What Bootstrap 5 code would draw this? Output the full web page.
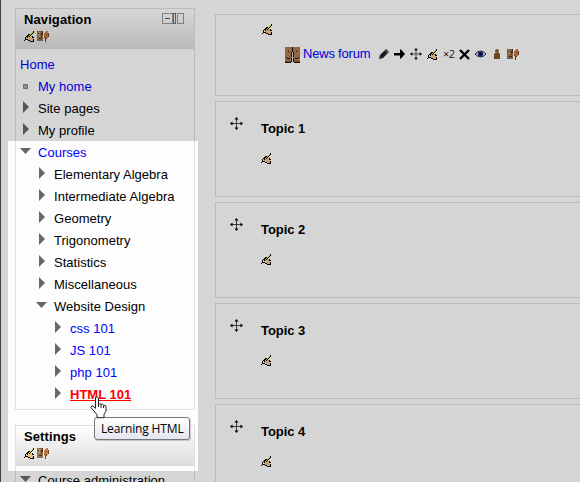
<!DOCTYPE html>
<html lang="en">
<head>
<meta charset="utf-8">
<meta name="viewport" content="width=device-width, initial-scale=1">
<title>Course topics</title>
<link href="https://cdn.jsdelivr.net/npm/bootstrap@5.3.0/dist/css/bootstrap.min.css" rel="stylesheet">
<style>
body{font:13px/22px "Liberation Sans",Arial,sans-serif;color:#000;background:#fdfdfd;height:482px}
.page-wrap{height:482px;border-left:1px solid #4c4a50}
.side{width:180px;margin-left:14px;padding-top:8px}
.blk{border:1.5px solid #dfdfdf}
.blk-nav{height:402px;margin-bottom:15px}
.blk-head{height:40px;background:linear-gradient(#fff,#dcdcdc);padding:1px 10px 0 8px;line-height:20px}
.blk-head b{letter-spacing:.1px}
.icons{gap:2px;padding-top:1px}
.tree{padding:5px 0 0 4px}
.tree a,.forum a{color:#00f;text-decoration:none}
.node{height:22px;display:flex;align-items:center;letter-spacing:.03px}
.mk{width:18px;flex:none;display:flex;align-items:center;height:22px}
.mk svg{display:block;margin-bottom:4px}
.mk .sq{margin-bottom:0}
.arr{padding-left:3px}
.l2{padding-left:16px}.l3{padding-left:32px}
.tree .cur{color:#f00;font-weight:bold;text-decoration:underline;letter-spacing:0}
.main{margin-left:20px;padding-top:14px;min-width:0}
.topic{border:1px solid #dfdfdf;border-right:0;height:96px;margin-bottom:5px;padding-left:14px}
.topic-first{height:82px;padding-left:46px}
.topic .mv{margin-top:15px;margin-right:18px}
.topic h3{font-size:13px;line-height:16px;font-weight:bold;margin:19px 0 16px;letter-spacing:-.05px}
.hand,.mv{display:block;flex:none}
.topic-first>.hand{margin-top:9px}
.forum{margin:9px 0 0 23px;height:22px}
.forum a{letter-spacing:-.2px;width:75px;margin:-2px 0 0 2px}
.acts{margin-top:-2px}
.acts svg{flex:none}
.x2{font:11px/12px "Open Sans",sans-serif;letter-spacing:-.6px;color:#222;width:16px}
.spot{left:8px;top:141px;width:190px;height:330px;box-shadow:0 0 0 900px rgba(0,0,0,.157);pointer-events:none}
.tip{left:94px;top:417px;width:96px;height:23px;border:1px solid #767676;border-radius:3px;background:linear-gradient(#fff,#e4e5f0);font:12px/21px "Open Sans",sans-serif;letter-spacing:-.15px;padding-left:6px;white-space:nowrap;box-shadow:1px 1px 1px #0003}
.ptr{left:89px;top:396px}
</style>
<script src="https://cdn.jsdelivr.net/npm/bootstrap@5.3.0/dist/js/bootstrap.bundle.min.js"></script>
</head>
<body class="overflow-hidden position-relative">
<svg width="0" height="0" class="position-absolute">
<defs>
<symbol id="hand" viewBox="0 0 11 11" shape-rendering="crispEdges">
<path fill="#f0c090" d="M6 5h2v1H6zM4 6h4v1H4zM3 7h6v1H3zM4 8h5v1H4zM6 9h3v1H6z"/>
<path fill="#e8dc10" d="M8 1h1v1H8zM7 2h1v1H7zM6 3h1v1H6zM5 4h1v1H5zM4 5h1v1H4z"/>
<path fill="#000" d="M9 0h1v1H9zM9 1h1v1H9zM8 2h1v1H8zM4 3h2v1H4zM7 3h1v1H7zM3 4h2v1H3zM6 4h1v1H6zM2 5h2v1H2zM5 5h1v1H5zM8 5h1v1H8zM1 6h1v1H1zM3 6h1v1H3zM8 6h2v1H8zM1 7h1v1H1zM1 8h1v1H1zM2 8h2v1H2zM9 8h1v2H9zM0 9h1v1H0zM4 9h2v1H4zM6 10h4v1H6z"/>
</symbol>
<symbol id="roles" viewBox="0 0 12 11" shape-rendering="crispEdges">
<path fill="#98704c" d="M0 0h6v10H0z"/><path fill="#b98a60" d="M1 1h2v5H1z"/>
<path fill="#493321" d="M1 2h1v1H1zM4 2h1v2H4zM2 7h3v1H2zM5 0h1v4H5zM4 5h1v1H4z"/><path fill="#777" d="M0 9h4v1H0z"/>
<path fill="#c87c46" d="M8 1h3v6H8zM7 2h1v5H7zM9 0h2v1H9z"/><path fill="#70401c" d="M7 6h1v1H7zM8 7h2v1H8zM9 3h1v1H9zM8 8h1v3H8zM11 2h1v4h-1z"/>
</symbol>
<symbol id="move" viewBox="0 0 13 13"><path fill="none" stroke="#333" stroke-width=".9" d="M6.500 1v11M1 6.500h11"/><path fill="#000" d="M6.500 0L8.500 2.500h-4zM6.500 13l2-2.500h-4zM0 6.500l2.500-2v4zM13 6.500l-2.500-2v4z"/></symbol>
<symbol id="right" viewBox="0 0 7 12"><path fill="#666" d="M0 0v12l6-6z"/></symbol>
<symbol id="down" viewBox="0 0 11 6"><path fill="#666" d="M0 0h11L5.500 6z"/></symbol>
</defs>
</svg>
<div class="page-wrap d-flex">
<aside class="side flex-shrink-0">
<section class="blk blk-nav">
<div class="blk-head">
<div class="d-flex justify-content-between align-items-start"><b>Navigation</b>
<svg width="22" height="12" style="margin-top:3px" shape-rendering="crispEdges"><path fill="none" stroke="#999" d="M.5.5h10v10H.5zM15.500.5h6v10h-6z"/><path stroke="#555" d="M3 5.500h5"/><path fill="#fff" stroke="#1683dd" d="M11.500.5h2v10h-2z"/></svg></div>
<div class="d-flex icons"><svg class="hand" width="11" height="11"><use href="#hand"/></svg><svg width="12" height="11"><use href="#roles"/></svg></div>
</div>
<div class="tree">
<div class="node"><a href="#">Home</a></div>
<div class="node"><span class="mk"><svg class="sq" width="10" height="6"><path fill="#aaa" stroke="#808080" d="M3.500.5h4v4h-4z"/></svg></span><a href="#">My home</a></div>
<div class="node"><span class="mk arr"><svg width="7" height="12"><use href="#right"/></svg></span>Site pages</div>
<div class="node"><span class="mk arr"><svg width="7" height="12"><use href="#right"/></svg></span>My profile</div>
<div class="node"><span class="mk"><svg width="11" height="6"><use href="#down"/></svg></span><a href="#">Courses</a></div>
<div class="node l2"><span class="mk arr"><svg width="7" height="12"><use href="#right"/></svg></span>Elementary Algebra</div>
<div class="node l2"><span class="mk arr"><svg width="7" height="12"><use href="#right"/></svg></span>Intermediate Algebra</div>
<div class="node l2"><span class="mk arr"><svg width="7" height="12"><use href="#right"/></svg></span>Geometry</div>
<div class="node l2"><span class="mk arr"><svg width="7" height="12"><use href="#right"/></svg></span>Trigonometry</div>
<div class="node l2"><span class="mk arr"><svg width="7" height="12"><use href="#right"/></svg></span>Statistics</div>
<div class="node l2"><span class="mk arr"><svg width="7" height="12"><use href="#right"/></svg></span>Miscellaneous</div>
<div class="node l2"><span class="mk"><svg width="11" height="6"><use href="#down"/></svg></span>Website Design</div>
<div class="node l3"><span class="mk arr"><svg width="7" height="12"><use href="#right"/></svg></span><a href="#">css 101</a></div>
<div class="node l3"><span class="mk arr"><svg width="7" height="12"><use href="#right"/></svg></span><a href="#">JS 101</a></div>
<div class="node l3"><span class="mk arr"><svg width="7" height="12"><use href="#right"/></svg></span><a href="#">php 101</a></div>
<div class="node l3"><span class="mk arr"><svg width="7" height="12"><use href="#right"/></svg></span><a href="#" class="cur">HTML 101</a></div>
</div>
</section>
<section class="blk">
<div class="blk-head"><div class="ps-0"><b>Settings</b></div>
<div class="d-flex icons"><svg class="hand" width="11" height="11"><use href="#hand"/></svg><svg width="12" height="11"><use href="#roles"/></svg></div></div>
<div class="tree pt-1"><div class="node"><span class="mk"><svg width="11" height="6"><use href="#down"/></svg></span>Course administration</div></div>
</section>
</aside>
<main class="main flex-grow-1">
<section class="topic topic-first">
<svg class="hand" width="11" height="11"><use href="#hand"/></svg>
<div class="forum d-flex align-items-center">
<svg width="16" height="16" shape-rendering="crispEdges"><path fill="#ad7c50" d="M0 0h15v14H0z"/><path fill="#18100a" d="M7 0h1v5H7zM6 5h1v5H6zM8 5h1v5H8zM3 4h1v1H3zM11 4h1v1h-1zM2 11h3v1H2zM10 11h3v1h-3zM1 10h1v1H1zM13 10h1v1h-1zM0 15h6v1H0zM9 15h6v1H9zM6 11h1v4H6zM8 11h1v4H8z"/><path fill="#ddd" d="M7 5h1v11H7z"/><path fill="#7c5533" d="M0 14h6v1H0zM9 14h6v1H9z"/></svg>
<a href="#">News forum</a>
<div class="d-flex align-items-center acts">
<svg width="16" height="12"><path d="M1 11l1-4 6-6 3 3-6 6z" fill="#222"/><path d="M7 2l3 3" stroke="#aaa" stroke-width=".8"/></svg>
<svg width="16" height="12"><path d="M0 5h6V1.500h1l4 4.500-4 4.500H6V7.500H0z"/></svg>
<svg width="17" height="12"><use href="#move" width="12" height="12"/></svg>
<svg width="16" height="11"><use href="#hand" width="11" height="11"/></svg>
<span class="x2">×2</span>
<svg width="16" height="12"><path d="M1 2l9 9M10 2l-9 9" stroke="#000" stroke-width="2.300"/></svg>
<svg width="16" height="12"><path d="M0 6q5.500-6 11 0q-5.500 6-11 0z" fill="#eee" stroke="#222"/><circle cx="5.500" cy="6" r="2.700" fill="#1b2a9c"/><circle cx="5.500" cy="6" r="1.200"/></svg>
<svg width="16" height="12"><path d="M3 11V6l1-1h4l1 1v5z" fill="#825426"/><circle cx="6" cy="3" r="2" fill="#8c6034"/></svg>
<svg width="12" height="11"><use href="#roles"/></svg>
</div>
</div>
</section>
<section class="topic d-flex align-items-start"><svg class="mv" width="13" height="13"><use href="#move"/></svg><div><h3>Topic 1</h3><svg class="hand" width="11" height="11"><use href="#hand"/></svg></div></section>
<section class="topic d-flex align-items-start"><svg class="mv" width="13" height="13"><use href="#move"/></svg><div><h3>Topic 2</h3><svg class="hand" width="11" height="11"><use href="#hand"/></svg></div></section>
<section class="topic d-flex align-items-start"><svg class="mv" width="13" height="13"><use href="#move"/></svg><div><h3>Topic 3</h3><svg class="hand" width="11" height="11"><use href="#hand"/></svg></div></section>
<section class="topic d-flex align-items-start"><svg class="mv" width="13" height="13"><use href="#move"/></svg><div><h3>Topic 4</h3><svg class="hand" width="11" height="11"><use href="#hand"/></svg></div></section>
</main>
</div>
<div class="spot position-absolute"></div>
<div class="tip position-absolute">Learning HTML</div>
<svg class="ptr position-absolute" width="20" height="23"><path d="M6.500 1.500q1.500-1.500 3 .5v6q1.500-1 2.500.5q1.500-1 2.500.7q2.500-.5 2.500 2v4l-2 3v3.500H8v-3L2 11.500q0-2 2-1.500l2.500 2.500z" fill="#fff" stroke="#222"/><path d="M9.500 8v3M12 8.500V12M14.500 9.500V12" stroke="#222"/></svg>
</body>
</html>
